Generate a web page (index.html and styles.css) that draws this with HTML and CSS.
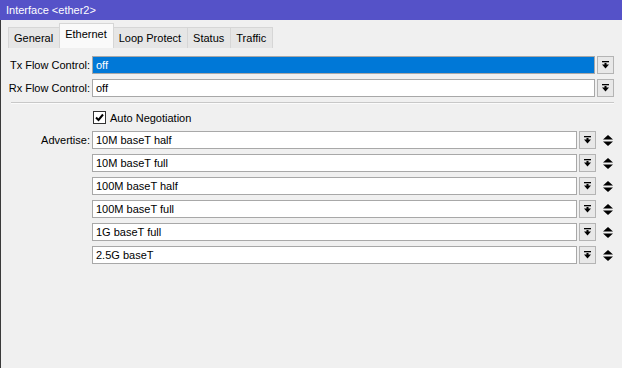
FILE: index.html
```
<!DOCTYPE html>
<html>
<head>
<meta charset="utf-8">
<link rel="stylesheet" href="styles.css">
</head>
<body>
<div class="titlebar">Interface &lt;ether2&gt;</div>
<div class="window">
  <div class="tabs">
    <div class="tab">General</div>
    <div class="tab active">Ethernet</div>
    <div class="tab">Loop Protect</div>
    <div class="tab">Status</div>
    <div class="tab">Traffic</div>
  </div>
  <div class="form">
    <div class="row">
      <div class="label">Tx Flow Control:</div>
      <div class="field selected">off</div>
      <div class="btn"><svg width="7" height="8" viewBox="0 0 7 8"><rect x="0" y="0" width="7" height="1.3" fill="#000"/><rect x="2.5" y="2" width="2" height="2" fill="#000"/><polygon points="0,3.5 7,3.5 3.5,7.5" fill="#000"/></svg></div>
    </div>
    <div class="row">
      <div class="label">Rx Flow Control:</div>
      <div class="field">off</div>
      <div class="btn"><svg width="7" height="8" viewBox="0 0 7 8"><rect x="0" y="0" width="7" height="1.3" fill="#000"/><rect x="2.5" y="2" width="2" height="2" fill="#000"/><polygon points="0,3.5 7,3.5 3.5,7.5" fill="#000"/></svg></div>
    </div>
    <div class="sep"></div>
    <div class="checkrow">
      <div class="label"></div>
      <div class="checkbox"><svg width="11" height="11" viewBox="0 0 11 11"><polyline points="2,5.5 4.5,8 9,2.5" fill="none" stroke="#000" stroke-width="2"/></svg></div>
      <div class="checktext">Auto Negotiation</div>
    </div>
    <div class="row adv">
      <div class="label">Advertise:</div>
      <div class="field">10M baseT half</div>
      <div class="btn"><svg width="7" height="8" viewBox="0 0 7 8"><rect x="0" y="0" width="7" height="1.3" fill="#000"/><rect x="2.5" y="2" width="2" height="2" fill="#000"/><polygon points="0,3.5 7,3.5 3.5,7.5" fill="#000"/></svg></div>
      <div class="updown"><svg width="10" height="11" viewBox="0 0 10 11"><polygon points="0,4.5 10,4.5 5,0" fill="#000"/><polygon points="0,6.5 10,6.5 5,11" fill="#000"/></svg></div>
    </div>
    <div class="row adv">
      <div class="label"></div>
      <div class="field">10M baseT full</div>
      <div class="btn"><svg width="7" height="8" viewBox="0 0 7 8"><rect x="0" y="0" width="7" height="1.3" fill="#000"/><rect x="2.5" y="2" width="2" height="2" fill="#000"/><polygon points="0,3.5 7,3.5 3.5,7.5" fill="#000"/></svg></div>
      <div class="updown"><svg width="10" height="11" viewBox="0 0 10 11"><polygon points="0,4.5 10,4.5 5,0" fill="#000"/><polygon points="0,6.5 10,6.5 5,11" fill="#000"/></svg></div>
    </div>
    <div class="row adv">
      <div class="label"></div>
      <div class="field">100M baseT half</div>
      <div class="btn"><svg width="7" height="8" viewBox="0 0 7 8"><rect x="0" y="0" width="7" height="1.3" fill="#000"/><rect x="2.5" y="2" width="2" height="2" fill="#000"/><polygon points="0,3.5 7,3.5 3.5,7.5" fill="#000"/></svg></div>
      <div class="updown"><svg width="10" height="11" viewBox="0 0 10 11"><polygon points="0,4.5 10,4.5 5,0" fill="#000"/><polygon points="0,6.5 10,6.5 5,11" fill="#000"/></svg></div>
    </div>
    <div class="row adv">
      <div class="label"></div>
      <div class="field">100M baseT full</div>
      <div class="btn"><svg width="7" height="8" viewBox="0 0 7 8"><rect x="0" y="0" width="7" height="1.3" fill="#000"/><rect x="2.5" y="2" width="2" height="2" fill="#000"/><polygon points="0,3.5 7,3.5 3.5,7.5" fill="#000"/></svg></div>
      <div class="updown"><svg width="10" height="11" viewBox="0 0 10 11"><polygon points="0,4.5 10,4.5 5,0" fill="#000"/><polygon points="0,6.5 10,6.5 5,11" fill="#000"/></svg></div>
    </div>
    <div class="row adv">
      <div class="label"></div>
      <div class="field">1G baseT full</div>
      <div class="btn"><svg width="7" height="8" viewBox="0 0 7 8"><rect x="0" y="0" width="7" height="1.3" fill="#000"/><rect x="2.5" y="2" width="2" height="2" fill="#000"/><polygon points="0,3.5 7,3.5 3.5,7.5" fill="#000"/></svg></div>
      <div class="updown"><svg width="10" height="11" viewBox="0 0 10 11"><polygon points="0,4.5 10,4.5 5,0" fill="#000"/><polygon points="0,6.5 10,6.5 5,11" fill="#000"/></svg></div>
    </div>
    <div class="row adv">
      <div class="label"></div>
      <div class="field">2.5G baseT</div>
      <div class="btn"><svg width="7" height="8" viewBox="0 0 7 8"><rect x="0" y="0" width="7" height="1.3" fill="#000"/><rect x="2.5" y="2" width="2" height="2" fill="#000"/><polygon points="0,3.5 7,3.5 3.5,7.5" fill="#000"/></svg></div>
      <div class="updown"><svg width="10" height="11" viewBox="0 0 10 11"><polygon points="0,4.5 10,4.5 5,0" fill="#000"/><polygon points="0,6.5 10,6.5 5,11" fill="#000"/></svg></div>
    </div>
  </div>
</div>
</body>
</html>
```
FILE: styles.css
```
* { box-sizing: border-box; }
html, body { margin: 0; padding: 0; }
body {
  width: 622px;
  height: 368px;
  overflow: hidden;
  background: #f0f0f0;
  font-family: "Liberation Sans", Arial, sans-serif;
  font-size: 11px;
  color: #000;
}
.titlebar {
  height: 20px;
  line-height: 20px;
  background: #5552c8;
  color: #fff;
  padding-left: 6px;
}
.window {
  height: 348px;
  border-left: 1px solid #3a3a3a;
  background: #f0f0f0;
}
.tabs {
  display: flex;
  align-items: flex-end;
  height: 28px;
  padding-left: 7px;
}
.tab {
  height: 21px;
  line-height: 21px;
  padding: 0 6px 0 5px;
  background: #e6e6e6;
  border: 1px solid #d6d6d6;
  border-bottom: none;
  margin-right: -1px;
}
.tab.active {
  height: 25px;
  line-height: 20px;
  background: #fafafa;
  border-color: #d6d6d6;
  padding: 0 6px 4px 5px;
  position: relative;
  z-index: 1;
}
.form {
  padding-top: 8px;
  padding-right: 8px;
}
.row {
  display: flex;
  align-items: center;
  height: 18px;
  margin-bottom: 5px;
}
.label {
  width: 91px;
  flex: none;
  text-align: right;
  padding-right: 2px;
}
.field {
  flex: 1;
  height: 18px;
  line-height: 16px;
  border: 1px solid #a8a8a8;
  background: #fff;
  padding-left: 3px;
  white-space: nowrap;
}
.field.selected {
  background: #0078d7;
  color: #fff;
}
.btn {
  width: 17px;
  height: 18px;
  flex: none;
  margin-left: 2px;
  border: 1px solid #b4b4b4;
  background: #e8e8e8;
  display: flex;
  align-items: center;
  justify-content: center;
}
.btn svg { display: block; }
.updown {
  width: 18px;
  flex: none;
  display: flex;
  align-items: center;
  justify-content: flex-end;
  padding-right: 1px;
}
.updown svg { display: block; }
.sep {
  height: 2px;
  margin: 2px 0 7px 10px;
  border-top: 1px solid #c8c8c8;
  border-bottom: 1px solid #fbfbfb;
}
.checkrow {
  display: flex;
  align-items: center;
  height: 13px;
  margin-bottom: 7px;
}
.checkbox {
  width: 13px;
  height: 13px;
  margin-left: 1px;
  border: 1px solid #333;
  background: #fff;
  display: flex;
  align-items: center;
  justify-content: center;
}
.checktext {
  margin-left: 4px;
}
```
